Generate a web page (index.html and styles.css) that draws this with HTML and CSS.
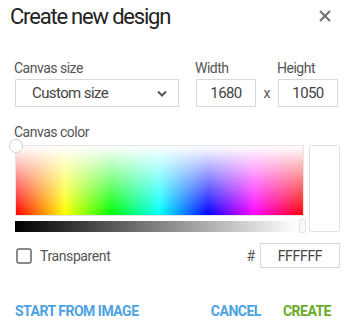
FILE: index.html
```html
<!DOCTYPE html>
<html>

<head lang="en">
    <meta charset="UTF-8">
    <title>Create new design</title>
    <link rel="stylesheet" href="styles.css">
</head>

<body>
    <div class="dialog">
        <div class="head">
            <h1>Create new design</h1>
            <a href="javascript:;" class="close">
                <svg width="12" height="12" viewBox="0 0 12 12">
                    <path d="M1 1L11 11M11 1L1 11" stroke="#6f6f6f" stroke-width="2" fill="none" />
                </svg>
            </a>
        </div>

        <div class="size-row">
            <div class="field field-select">
                <span class="label">Canvas size</span>
                <div class="box select">
                    <span>Custom size</span>
                    <svg width="10" height="7" viewBox="0 0 10 7">
                        <path d="M1 1.5L5 5.5L9 1.5" stroke="#555" stroke-width="2" fill="none" />
                    </svg>
                </div>
            </div>
            <div class="field field-num">
                <span class="label">Width</span>
                <div class="box num">1680</div>
            </div>
            <span class="times">x</span>
            <div class="field field-num">
                <span class="label">Height</span>
                <div class="box num">1050</div>
            </div>
        </div>

        <span class="label color-label">Canvas color</span>
        <div class="picker">
            <div class="picker-main">
                <div class="spectrum"><span class="knob"></span></div>
                <div class="shade"><span class="thumb"></span></div>
            </div>
            <div class="preview"></div>
        </div>

        <div class="opts">
            <label class="check"><span class="check-box"></span>Transparent</label>
            <span class="hash">#</span>
            <div class="box hex">FFFFFF</div>
        </div>

        <div class="actions">
            <a href="javascript:;" class="btn btn-blue">START FROM IMAGE</a>
            <a href="javascript:;" class="btn btn-blue btn-cancel">CANCEL</a>
            <a href="javascript:;" class="btn btn-green">CREATE</a>
        </div>
    </div>
</body>

</html>
```
FILE: styles.css
```css
/* reset */
body,
h1 {
    margin: 0;
    padding: 0;
}

body {
    font-family: Roboto, "Liberation Sans", sans-serif;
    color: #555;
    background: #fff;
}

a {
    text-decoration: none;
}

.dialog {
    width: 350px;
    padding: 4px 10px 0 15px;
    box-sizing: border-box;
}

.head {
    display: flex;
    justify-content: space-between;
    align-items: center;
    margin-left: -5px;
}

.head h1 {
    font-size: 22px;
    font-weight: 400;
    line-height: 26px;
    letter-spacing: -1.2px;
    color: #222;
}

.close {
    display: flex;
    margin-right: 9px;
    margin-top: -3px;
}

.label {
    display: block;
    font-size: 14px;
    line-height: 16px;
    letter-spacing: -0.5px;
    color: #555;
}

.size-row {
    display: flex;
    align-items: flex-end;
    margin-top: 30px;
}

.field .label {
    margin-bottom: 3px;
    margin-left: -1px;
}

.box {
    box-sizing: border-box;
    height: 28px;
    border: 1px solid #d9d9d9;
    font-size: 15px;
    letter-spacing: -0.6px;
    color: #444;
    display: flex;
    align-items: center;
}

.field-select {
    width: 164px;
}

.select {
    justify-content: space-between;
    padding: 0 11px 0 16px;
}

.field-num {
    width: 60px;
}

.field-num:nth-child(2) {
    margin-left: 17px;
}

.num {
    justify-content: center;
}

.times {
    width: 22px;
    text-align: center;
    font-size: 14px;
    line-height: 28px;
}

.color-label {
    margin-top: 17px;
    margin-left: -1px;
}

.picker {
    display: flex;
    margin-top: 5px;
}

.picker-main {
    width: 289px;
}

.spectrum {
    position: relative;
    height: 71px;
    box-sizing: border-box;
    border: 1px solid #e4e4e4;
    background:
        linear-gradient(to bottom, #fff, rgba(255, 255, 255, 0)),
        linear-gradient(to right, #f00, #ff0 17%, #0f0 33%, #0ff 50%, #00f 67%, #f0f 83%, #f00);
}

.knob {
    position: absolute;
    left: -7px;
    top: -7px;
    width: 12px;
    height: 12px;
    border-radius: 50%;
    background: #fff;
    border: 1px solid #cfcfcf;
}

.shade {
    position: relative;
    height: 11px;
    margin-top: 5px;
    width: 282px;
    background: linear-gradient(to right, #000, #fff);
}

.thumb {
    position: absolute;
    right: -9px;
    top: -2px;
    width: 5px;
    height: 12px;
    border: 1px solid #e2e2e2;
    border-radius: 2px;
    background: #fafafa;
}

.preview {
    width: 31px;
    height: 87px;
    box-sizing: border-box;
    margin-left: 5px;
    border: 1px solid #e2e2e2;
    border-radius: 2px;
    background: #fff;
}

.opts {
    display: flex;
    align-items: center;
    margin-top: 11px;
}

.check {
    display: flex;
    align-items: center;
    font-size: 14px;
    letter-spacing: -0.4px;
    color: #555;
    flex: 1;
}

.check-box {
    width: 16px;
    height: 16px;
    box-sizing: border-box;
    border: 2px solid #8a8a8a;
    border-radius: 3px;
    margin: 0 8px 0 1px;
}

.hash {
    font-size: 14px;
    margin-right: 5px;
}

.hex {
    width: 80px;
    height: 25px;
    justify-content: center;
    font-size: 14px;
    letter-spacing: -0.3px;
}

.actions {
    display: flex;
    margin-top: 35px;
}

.btn {
    font-size: 14px;
    font-weight: 700;
    line-height: 16px;
    letter-spacing: -0.5px;
}

.btn-blue {
    color: #4da2e2;
}

.btn-cancel {
    margin-left: auto;
}

.btn-green {
    color: #6aaa2a;
    margin-left: 22px;
    margin-right: 9px;
}
```
